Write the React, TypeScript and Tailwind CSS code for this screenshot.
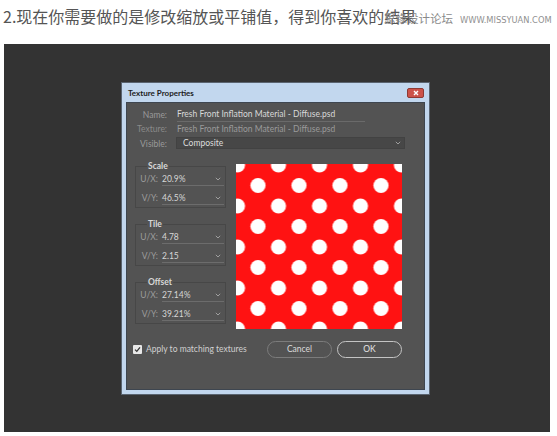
import React from "react";

const dlgFont = { fontFamily: 'Lato, "Open Sans", sans-serif' };

function Chevron() {
  return (
    <svg width="6" height="4" viewBox="0 0 6 4" className="shrink-0">
      <path d="M0.8 0.8 L3 3 L5.2 0.8" fill="none" stroke="#a8a8a8" strokeWidth="0.9" />
    </svg>
  );
}

function Field({ label, value }: { label: string; value: string }) {
  return (
    <div className="flex items-center h-[19px]">
      <span className="w-[20px] text-right text-[8.5px] text-[#9c9c9c]">{label}</span>
      <div className="ml-[4px] w-[62px] h-[13px] flex items-center justify-between border-b border-[#6c6c6c] pr-[3px]">
        <span className="text-[8.5px] text-[#d6d6d6]">{value}</span>
        <Chevron />
      </div>
    </div>
  );
}

function Group({ title, u, v }: { title: string; u: string; v: string }) {
  return (
    <fieldset className="border border-[#474747] w-[90px] h-[47px] px-[1px] pt-0 pb-[2px]">
      <legend className="ml-[10px] px-[1px] text-[8.5px] font-bold text-[#d8d8d8] leading-[10px]">{title}</legend>
      <div className="flex flex-col -mt-[1px] pl-[1px]">
        <Field label="U/X:" value={u} />
        <Field label="V/Y:" value={v} />
      </div>
    </fieldset>
  );
}

function Dots() {
  return (
    <svg width="166" height="165" viewBox="0 0 166 165" className="block">
      <defs>
        <pattern id="dots" x="1.5" y="1" width="41" height="41" patternUnits="userSpaceOnUse">
          <rect x="-1" y="-1" width="43" height="43" fill="#ff1212" />
          <circle cx="0" cy="0" r="7.6" fill="#ffffff" />
          <circle cx="41" cy="0" r="7.6" fill="#ffffff" />
          <circle cx="0" cy="41" r="7.6" fill="#ffffff" />
          <circle cx="41" cy="41" r="7.6" fill="#ffffff" />
          <circle cx="20.5" cy="20.5" r="7.6" fill="#ffffff" />
        </pattern>
      </defs>
      <rect width="166" height="165" fill="url(#dots)" />
    </svg>
  );
}

export default function App() {
  return (
    <div className="relative w-[557px] h-[436px] bg-white overflow-hidden">
      <div
        className="h-[44px] pl-[3px] pt-[6px] text-[16px] leading-[20px] text-[#555555] whitespace-nowrap"
        style={{ fontFamily: '"Noto Sans CJK SC", sans-serif' }}
      >
        2.现在你需要做的是修改缩放或平铺值，得到你喜欢的结果
      </div>
      <div
        className="absolute left-[384px] top-[10px] flex items-baseline gap-[7px] whitespace-nowrap text-[#8a8a8a]"
        style={{ fontFamily: '"Noto Sans CJK SC", sans-serif' }}
      >
        <span className="text-[11.5px] leading-[16px]">思缘设计论坛</span>
        <span className="text-[8.3px] text-[#909090]" style={{ fontFamily: '"DejaVu Sans", sans-serif' }}>
          WWW.MISSYUAN.COM
        </span>
      </div>
      <div className="ml-[4px] w-[546px] h-[388px] bg-[#333333] pl-[117px] pt-[38px]">
        <div className="w-[309px] h-[313px] border border-[#5a6470] bg-[#c2d7ee] flex flex-col" style={dlgFont}>
          <div className="h-[19px] flex items-center justify-between pl-[6px] pr-[5px]">
            <span className="text-[8px] font-bold text-[#1c1c1c]">Texture Properties</span>
            <div className="w-[17px] h-[10px] rounded-[2px] bg-[#cc5249] border border-[#8e3a34] flex items-center justify-center">
              <svg width="6" height="6" viewBox="0 0 6 6">
                <path d="M1 1 L5 5 M5 1 L1 5" stroke="#ffffff" strokeWidth="1.4" />
              </svg>
            </div>
          </div>
          <div className="mx-[4px] mb-[4px] flex-1 border border-[#3e4650] bg-[#535353] flex flex-col">
            <div className="flex flex-col pt-[5px]">
              <div className="flex items-center h-[14px]">
                <span className="w-[40px] text-right text-[8.5px] text-[#9a9a9a]">Name:</span>
                <div className="ml-[10px] w-[188px] h-[13px] flex items-center border-b border-[#6a6a6a]">
                  <span className="text-[8.5px] text-[#d8d8d8]">Fresh Front Inflation Material - Diffuse.psd</span>
                </div>
              </div>
              <div className="flex items-center h-[14px]">
                <span className="w-[40px] text-right text-[8.5px] text-[#8a8a8a]">Texture:</span>
                <span className="ml-[10px] text-[8.5px] text-[#9a9a9a]">Fresh Front Inflation Material - Diffuse.psd</span>
              </div>
              <div className="flex items-center h-[14px]">
                <span className="w-[40px] text-right text-[8.5px] text-[#9a9a9a] mt-[3px]">Visible:</span>
                <div className="ml-[9px] w-[229px] h-[12px] bg-[#474747] border border-[#424242] flex items-center justify-between pl-[6px] pr-[3px]">
                  <span className="text-[8.5px] text-[#dcdcdc]">Composite</span>
                  <Chevron />
                </div>
              </div>
            </div>
            <div className="flex mt-[11px] pl-[8px]">
              <div className="flex flex-col gap-[11px]">
                <Group title="Scale" u="20.9%" v="46.5%" />
                <Group title="Tile" u="4.78" v="2.15" />
                <Group title="Offset" u="27.14%" v="39.21%" />
              </div>
              <div className="ml-[10px] mt-[3px]">
                <Dots />
              </div>
            </div>
            <div className="flex items-center mt-[12px] pl-[6px]">
              <div className="w-[9px] h-[9px] bg-[#e8e8e8] rounded-[1px] flex items-center justify-center">
                <svg width="7" height="7" viewBox="0 0 7 7">
                  <path d="M1 3.6 L2.8 5.4 L6 1.4" fill="none" stroke="#333" strokeWidth="1.3" />
                </svg>
              </div>
              <span className="ml-[4px] text-[8.5px] text-[#d0d0d0]">Apply to matching textures</span>
              <div className="ml-auto w-[65px] h-[17px] rounded-full border border-[#7c7c7c] flex items-center justify-center text-[8.5px] text-[#dcdcdc]">
                Cancel
              </div>
              <div className="ml-[5px] mr-[22px] w-[65px] h-[17px] rounded-full border-[1.5px] border-[#c4c4c4] flex items-center justify-center text-[8.5px] text-[#e4e4e4]">
                OK
              </div>
            </div>
          </div>
        </div>
      </div>
    </div>
  );
}
